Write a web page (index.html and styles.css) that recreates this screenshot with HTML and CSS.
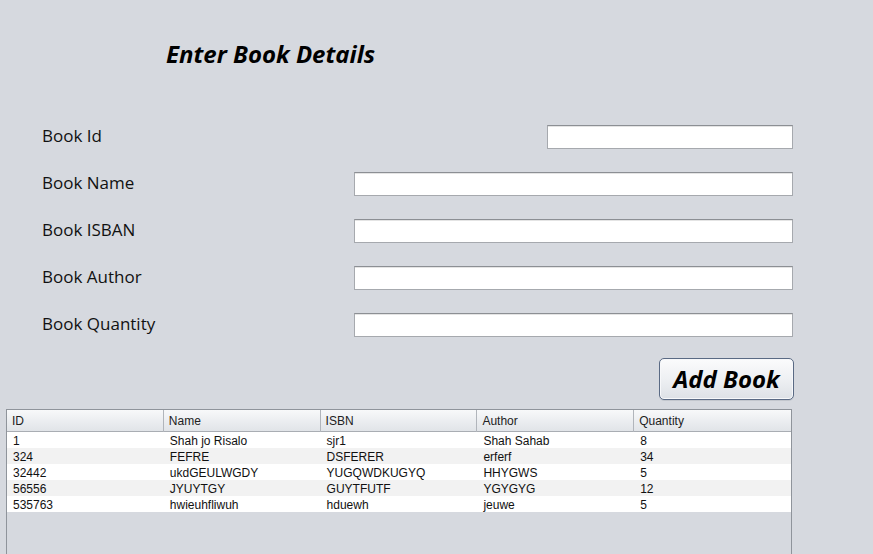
FILE: index.html
```html
<!DOCTYPE html>
<html>
<head>
<meta charset="utf-8">
<link rel="stylesheet" href="styles.css">
</head>
<body>
<div class="frame">
  <h1 class="title">Enter Book Details</h1>
  <div class="form">
    <label class="label">Book Id</label>
    <input class="field field-short" type="text">
    <label class="label">Book Name</label>
    <input class="field" type="text">
    <label class="label">Book ISBAN</label>
    <input class="field" type="text">
    <label class="label">Book Author</label>
    <input class="field" type="text">
    <label class="label">Book Quantity</label>
    <input class="field" type="text">
  </div>
  <div class="actions">
    <button class="btn">Add Book</button>
  </div>
  <div class="scroll">
    <div class="thead">
      <div class="th">ID</div>
      <div class="th">Name</div>
      <div class="th">ISBN</div>
      <div class="th">Author</div>
      <div class="th last">Quantity</div>
    </div>
    <div class="tr">
      <div class="td">1</div><div class="td">Shah jo Risalo</div><div class="td">sjr1</div><div class="td">Shah Sahab</div><div class="td">8</div>
    </div>
    <div class="tr alt">
      <div class="td">324</div><div class="td">FEFRE</div><div class="td">DSFERER</div><div class="td">erferf</div><div class="td">34</div>
    </div>
    <div class="tr">
      <div class="td">32442</div><div class="td">ukdGEULWGDY</div><div class="td">YUGQWDKUGYQ</div><div class="td">HHYGWS</div><div class="td">5</div>
    </div>
    <div class="tr alt">
      <div class="td">56556</div><div class="td">JYUYTGY</div><div class="td">GUYTFUTF</div><div class="td">YGYGYG</div><div class="td">12</div>
    </div>
    <div class="tr">
      <div class="td">535763</div><div class="td">hwieuhfliwuh</div><div class="td">hduewh</div><div class="td">jeuwe</div><div class="td">5</div>
    </div>
  </div>
</div>
</body>
</html>
```

FILE: styles.css
```css
html, body {
  margin: 0;
  padding: 0;
  background: #d6d9df;
}
.frame {
  width: 873px;
  height: 554px;
  overflow: hidden;
  box-sizing: border-box;
  padding-top: 37px;
}
.title {
  margin: 0;
  padding-left: 166px;
  height: 33px;
  line-height: 33px;
  font-family: "Open Sans", sans-serif;
  font-style: italic;
  font-weight: 700;
  font-size: 24px;
  color: #000;
}
.form {
  margin-top: 55px;
  padding-left: 42px;
  display: grid;
  grid-template-columns: 312px 439px;
  row-gap: 23px;
  align-items: center;
}
.label {
  font-family: "Open Sans", sans-serif;
  font-size: 17px;
  color: #111;
  line-height: 22px;
  padding-bottom: 2px;
}
.field {
  box-sizing: border-box;
  height: 24px;
  width: 439px;
  margin: 0;
  background: #fff;
  border: 1px solid #a6a9ae;
  border-top-color: #8c8f94;
  box-shadow: inset 0 1px 0 #e4e4e4;
  border-radius: 0;
  padding: 0 4px;
  outline: none;
}
.field-short {
  width: 246px;
  justify-self: end;
}
.actions {
  display: flex;
  justify-content: flex-end;
  padding-right: 79px;
  margin-top: 21px;
}
.btn {
  box-sizing: border-box;
  width: 135px;
  height: 42px;
  margin: 0;
  padding: 0;
  border: 1px solid #5a6a84;
  border-radius: 5px;
  background: linear-gradient(#fbfbfc 0%, #eef0f3 50%, #dde1e6 100%);
  box-shadow: inset 0 0 0 1px #f7f8fa, 0 1px 0 #c2c6cd;
  font-family: "Open Sans", sans-serif;
  font-style: italic;
  font-weight: 700;
  font-size: 24px;
  line-height: 38px;
  color: #000;
}
.scroll {
  margin-top: 9px;
  margin-left: 6px;
  width: 786px;
  height: 160px;
  box-sizing: border-box;
  border: 1px solid #8f949b;
  background: #d6d9df;
}
.thead {
  display: grid;
  grid-template-columns: repeat(5, 1fr);
  height: 22px;
  box-sizing: border-box;
  background: linear-gradient(#f8f9fa 0%, #eceef1 50%, #e1e4e8 100%);
  border-bottom: 1px solid #a9adb3;
}
.th {
  font-family: "Liberation Sans", Arial, sans-serif;
  font-size: 12px;
  line-height: 21px;
  padding-top: 1px;
  padding-left: 5px;
  color: #222;
  border-right: 1px solid #b1b5bb;
}
.th.last {
  border-right: none;
}
.tr {
  display: grid;
  grid-template-columns: repeat(5, 1fr);
  height: 16px;
  background: #fff;
}
.tr.alt {
  background: #f2f2f2;
}
.td {
  font-family: "Liberation Sans", Arial, sans-serif;
  font-size: 12px;
  line-height: 16px;
  padding-top: 1px;
  padding-left: 6px;
  color: #111;
  white-space: nowrap;
  height: 15px;
}
```
